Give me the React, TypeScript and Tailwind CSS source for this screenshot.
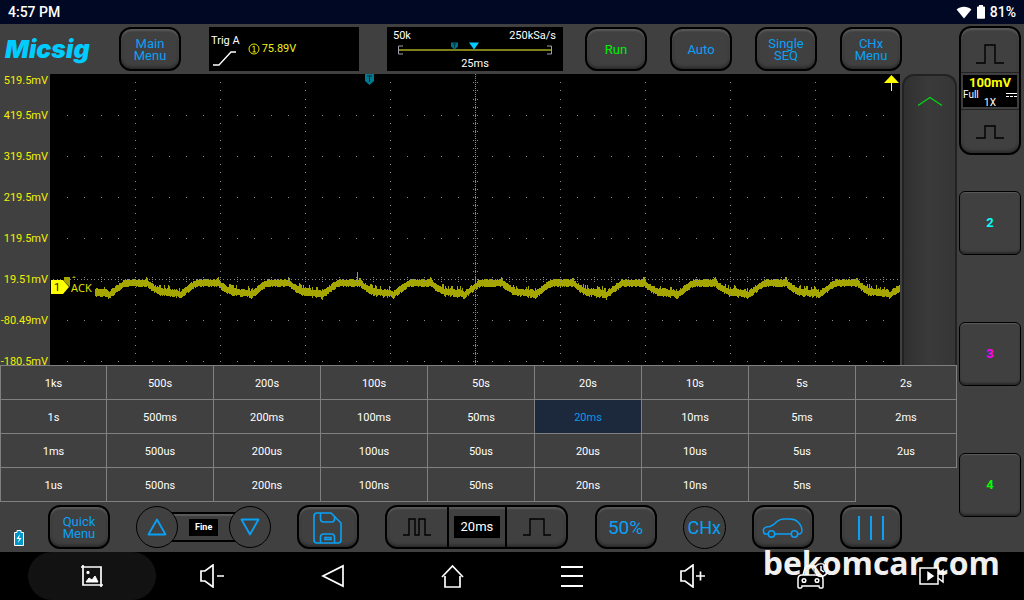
import { useState, type ReactNode } from "react";

const TIME_BASES = [
  ["1ks", "500s", "200s", "100s", "50s", "20s", "10s", "5s", "2s"],
  ["1s", "500ms", "200ms", "100ms", "50ms", "20ms", "10ms", "5ms", "2ms"],
  ["1ms", "500us", "200us", "100us", "50us", "20us", "10us", "5us", "2us"],
  ["1us", "500ns", "200ns", "100ns", "50ns", "20ns", "10ns", "5ns"],
];

const VOLT_LABELS = ["419.5mV", "319.5mV", "219.5mV", "119.5mV", "19.51mV", "-80.49mV", "-180.5mV"];

const PLOT_W = 850;
const PLOT_H = 291;
const DIV_X = 85;
const DIV_Y = 41;

// one period of the trace: [phase, y]
const SHAPE = [
  [0, 219],
  [0.06, 216],
  [0.13, 212],
  [0.2, 209],
  [0.5, 209],
  [0.57, 213],
  [0.64, 216],
  [0.7, 218],
  [0.92, 219],
  [0.97, 221],
  [1, 219],
];

function shapeAt(phase: number) {
  for (let i = 1; i < SHAPE.length; i++) {
    const [x1, y1] = SHAPE[i];
    const [x0, y0] = SHAPE[i - 1];
    if (phase <= x1) return y0 + ((y1 - y0) * (phase - x0)) / (x1 - x0);
  }
  return SHAPE[0][1];
}

function buildTrace() {
  let seed = 7;
  const rand = () => {
    seed = (seed * 16807) % 2147483647;
    return seed / 2147483647;
  };
  let d = "";
  for (let x = 45; x < PLOT_W; x++) {
    const phase = ((x + 10) % 71) / 71;
    const mid = Math.round(shapeAt(phase));
    const low = phase > 0.64;
    let top = mid - 3 - Math.floor(rand() * 1.8);
    let bottom = mid + 3 + Math.floor(rand() * 2);
    if (low && rand() > 0.75) top -= 3;
    if (low && rand() > 0.75) bottom += 1;
    if (phase > 0.48 && phase < 0.52) top -= 2;
    if (x === 307) top = 198;
    d += `M${x + 0.5} ${top}V${bottom}`;
  }
  return d;
}

const TRACE = buildTrace();

function buildGrid() {
  const dots: string[] = [];
  const dot = (x: number, y: number) => dots.push(`M${Math.round(x)} ${Math.round(y) + 0.5}h1`);
  for (let row = 1; row * DIV_Y < PLOT_H; row++) {
    for (let i = 1; i < 50; i++) dot(i * 17, row * DIV_Y);
  }
  for (let col = 1; col < 10; col++) {
    for (let i = 1; i < 36; i++) dot(col * DIV_X, i * 8.2);
  }
  for (let y = 0; y < PLOT_H; y += 2) dot(425, y);
  for (let i = 1; i < 36; i++) {
    dot(423, i * 8.2);
    dot(427, i * 8.2);
  }
  for (let i = 1; i < 250; i++) dot(i * 3.4, 205);
  for (let i = 1; i < 50; i++) {
    dot(i * 17, 203);
    dot(i * 17, 207);
  }
  return dots.join("");
}

const GRID = buildGrid();

function PanelButton({ children, label }: { children: ReactNode; label?: string }) {
  return (
    <button
      type="button"
      aria-label={label}
      className="flex h-11 w-[62px] shrink-0 items-center justify-center rounded-xl border-2 border-black bg-[#404040] pt-px text-center text-[13px] leading-3 text-[#0aa0f5] shadow-[inset_0_2px_2px_#5a5a5a,inset_0_-2px_3px_#2a2a2a]"
    >
      {children}
    </button>
  );
}

function ChannelButton({ name, color }: { name: string; color: string }) {
  return (
    <button
      type="button"
      className={`flex h-16 w-[62px] items-center justify-center rounded-md border border-black bg-[#404040] text-[13px] font-bold shadow-[inset_0_1px_1px_#5a5a5a,inset_0_-2px_2px_#2a2a2a] ${color}`}
    >
      {name}
    </button>
  );
}

function Pulse({ d, className }: { d: string; className: string }) {
  return (
    <svg viewBox="0 0 28 20" className={className} fill="none" stroke="#000" strokeWidth="1.4">
      <path d={d} />
    </svg>
  );
}

function StatusBar() {
  return (
    <header className="flex h-6 shrink-0 items-center justify-between bg-[#000823] px-2 text-[14px] font-medium text-white">
      <span>4:57 PM</span>
      <div className="flex items-center gap-1">
        <svg viewBox="0 0 16 13" className="h-[13px] w-4" fill="#fff">
          <path d="M8 12.6 0.6 3.6C2.6 1.8 5.2.8 8 .8s5.4 1 7.4 2.8z" />
        </svg>
        <svg viewBox="0 0 10 14" className="h-[14px] w-[10px]" fill="#fff">
          <path d="M3 0h4v1.6h1.2q.8 0 .8.8V13q0 .8-.8.8H1.8Q1 13.8 1 13V2.4q0-.8.8-.8H3z" />
        </svg>
        <span>81%</span>
      </div>
    </header>
  );
}

function TopBar() {
  return (
    <div className="flex h-[50px] items-center justify-between pr-[55px] pl-[5px]">
      <div className="flex items-center gap-7">
        <span className="w-[86px] font-['Inter'] text-[25px] leading-6 font-black text-[#00ccff] italic">Micsig</span>
        <PanelButton>
          Main
          <br />
          Menu
        </PanelButton>
        <div className="flex h-11 w-[150px] items-center gap-[6px] bg-black pl-[2px] text-[11px] text-white">
          <div className="flex flex-col gap-1 pt-1">
            <span className="text-[11px] leading-3">Trig A</span>
            <svg viewBox="0 0 26 16" className="h-4 w-[26px]" fill="none" stroke="#fff" strokeWidth="1.3">
              <path d="M2 14h6L20 1h5" />
            </svg>
          </div>
          <span className="flex items-center gap-[2px] text-[#f0f020]">
            <svg viewBox="0 0 12 12" className="ml-[2px] h-3 w-3" fill="none" stroke="#e6e600">
              <circle cx="6" cy="6" r="5" />
              <path d="M4.5 4 6.200 3v6M4.5 9h3.400" />
            </svg>
            75.89V
          </span>
        </div>
        <div className="h-11 w-44 shrink-0 bg-black px-[6px] text-[11px] leading-3 text-white">
          <div className="flex justify-between pt-[3px] pr-px">
            <span>50k</span>
            <span>250kSa/s</span>
          </div>
          <svg viewBox="0 0 164 15" className="h-4 w-full" fill="none">
            <path d="M6 7.5h153" stroke="#ffff33" />
            <path d="M10 3.5H5.5v8H10M154 3.5h4.5v8H154" stroke="#a0a0b0" />
            <path d="M58 0h7v4L61.5 7 58 4z" fill="#007088" />
            <path d="M60 1.5h3M61.5 2v3" stroke="#002a33" />
            <path d="M76 0h10l-5 7z" fill="#00ccff" />
          </svg>
          <div className="text-center">25ms</div>
        </div>
      </div>
      <div className="flex gap-[23px]">
        <PanelButton>
          <span className="text-[#00f000]">Run</span>
        </PanelButton>
        <PanelButton>Auto</PanelButton>
        <PanelButton>
          Single
          <br />
          SEQ
        </PanelButton>
        <PanelButton>
          CHx
          <br />
          Menu
        </PanelButton>
      </div>
    </div>
  );
}

function Scope() {
  return (
    <div className="flex h-[291px] overflow-hidden">
      <div className="w-[50px] shrink-0 pt-px pr-[2px] text-right text-[11px] text-[#f0f000]">
        <div className="h-5 leading-3">519.5mV</div>
        {VOLT_LABELS.map((v) => (
          <div key={v} className="h-[41px] leading-[41px] whitespace-nowrap">
            {v}
          </div>
        ))}
      </div>
      <svg
        viewBox={`0 0 ${PLOT_W} ${PLOT_H}`}
        preserveAspectRatio="none"
        className="h-full min-w-0 flex-1 bg-black"
        fill="none"
      >
        <path d={TRACE} stroke="#a6a600" shapeRendering="crispEdges" />
        <path d={GRID} stroke="#8a8a8a" shapeRendering="crispEdges" />
        <path d="M14 203h6v10l-6-6zM22 204l2-2 2 2z" fill="#a6a600" />
        <path d="M1 206h12l6 7-6 7H1z" fill="#ffff00" />
        <text x="4" y="217" fill="#222" fontSize="11">
          1
        </text>
        <rect x="20" y="207" width="24" height="13" fill="#000" />
        <text x="21" y="218" fill="#e6e600" fontFamily="Open Sans" fontSize="11">
          ACK
        </text>
        <path d="M315 0h9v7l-4.5 4-4.5-4z" fill="#007a90" />
        <path d="M317 2h5M319.5 2v6" stroke="#002a33" />
        <path d="M841.5 1 834 9h15zM841 9h1v8h-1z" fill="#ffff00" />
      </svg>
      <button
        type="button"
        aria-label="Expand"
        className="ml-[2px] flex w-[55px] shrink-0 justify-center rounded-t-xl border-x-2 border-t-2 border-[#222] bg-gradient-to-r from-[#303030] via-[#3a3a3a] to-[#363636] pt-5"
      >
        <svg viewBox="0 0 26 12" className="h-3 w-[26px]" fill="none" stroke="#00d810" strokeWidth="1.3">
          <path d="M1 9.5 13 1.5l12 8" />
        </svg>
      </button>
    </div>
  );
}

function TimeBaseGrid({ value, onChange }: { value: string; onChange: (v: string) => void }) {
  return (
    <div className="border-t border-[#808080]">
      {TIME_BASES.map((row) => (
        <div key={row[0]} className="grid grid-cols-[107fr_repeat(7,107fr)_101fr]">
          {row.map((t, i) => (
            <button
              key={t}
              type="button"
              onClick={() => onChange(t)}
              className={`h-[34px] border-r border-b border-[#808080] pt-[3px] text-[11px] ${i === 0 ? "border-l" : ""} ${
                t === value ? "bg-[#1c283c] text-[#0a9ae8]" : "text-white"
              }`}
            >
              {t}
            </button>
          ))}
        </div>
      ))}
    </div>
  );
}

function BottomBar({ timeBase }: { timeBase: string }) {
  return (
    <div className="flex h-[50px] items-center gap-6 pr-[55px] pl-[14px]">
      <svg viewBox="0 0 10 16" className="mt-[22px] h-4 w-[10px] shrink-0">
        <path d="M3 .5h4v2h2.5v13h-9v-13H3z" fill="#0098c8" stroke="#fff" />
        <path d="M6 4 2.5 9H5l-1 4 3.5-5H5z" fill="#fff" />
      </svg>
      <div className="flex flex-1 items-center justify-between">
        <PanelButton>
          Quick
          <br />
          Menu
        </PanelButton>
        <div className="flex items-center">
          <button
            type="button"
            aria-label="Increase"
            className="z-10 flex size-[42px] items-center justify-center rounded-full border border-black bg-[#404040]"
          >
            <svg viewBox="0 0 20 18" className="h-[18px] w-5" fill="none" stroke="#0aa0f5" strokeWidth="1.8" strokeLinejoin="round">
              <path d="M10 1.5 18.5 16.5h-17z" />
            </svg>
          </button>
          <div className="-mx-2 flex h-[30px] w-[67px] items-center justify-center border-y-2 border-black shadow-[inset_0_2px_1px_#5a5a5a]">
            <span className="bg-black px-[6px] text-[9px] leading-[17px] font-bold text-white">Fine</span>
          </div>
          <button
            type="button"
            aria-label="Decrease"
            className="z-10 flex size-[42px] items-center justify-center rounded-full border border-black bg-[#404040]"
          >
            <svg viewBox="0 0 20 18" className="h-[18px] w-5" fill="none" stroke="#0aa0f5" strokeWidth="1.8" strokeLinejoin="round">
              <path d="M10 16.5 18.5 1.5h-17z" />
            </svg>
          </button>
        </div>
        <PanelButton label="Save">
          <svg viewBox="0 0 30 34" className="h-[34px] w-[30px]" fill="none" stroke="#0aa0f5" strokeWidth="1.6">
            <path d="M4 2h14l10 10v17q0 3-3 3H4q-3 0-3-3V5q0-3 3-3z" />
            <path d="M7.5 2v6q0 3 3 3h8q3 0 3-3V5M7.5 32v-6q0-3 3-3h8q3 0 3 3v6" />
            <path d="M12 26.5h6v2h-6z" />
          </svg>
        </PanelButton>
        <div className="flex h-11 w-[183px] items-stretch overflow-hidden rounded-xl border-2 border-black shadow-[inset_0_2px_2px_#5a5a5a,inset_0_-2px_3px_#2a2a2a]">
          <button type="button" aria-label="Zoom out time base" className="flex flex-1 items-center justify-center">
            <Pulse d="M0 18h6V2h6v16h4V2h6v16h6" className="h-5 w-7" />
          </button>
          <div className="flex w-[60px] items-center justify-center border-x-2 border-black">
            <span className="w-[46px] bg-black text-center text-[13px] leading-[22px] text-white">{timeBase}</span>
          </div>
          <button type="button" aria-label="Zoom in time base" className="flex flex-1 items-center justify-center">
            <Pulse d="M0 18h7V2h14v16h7" className="h-5 w-7" />
          </button>
        </div>
        <PanelButton>
          <span className="text-[19px]">50%</span>
        </PanelButton>
        <button
          type="button"
          className="flex size-[43px] items-center justify-center rounded-full border border-black text-[18px] text-[#0aa0f5]"
        >
          CHx
        </button>
        <PanelButton label="Vehicle">
          <svg viewBox="0 0 42 22" className="h-[22px] w-[42px]" fill="none" stroke="#0aa0f5" strokeWidth="1.5">
            <path d="M6 17H3q-2-1-1.5-4.5Q2.5 9.5 8 9.5 12 8 15 4.5 18 2 22 2h6q5 0 8 3 4 4 4 9-.5 3-3 3h-1M13 17h16" />
            <circle cx="9.5" cy="17" r="3.2" />
            <circle cx="32.5" cy="17" r="3.2" />
          </svg>
        </PanelButton>
        <PanelButton label="Cursors">
          <svg viewBox="0 0 28 24" className="h-6 w-7" fill="none" stroke="#0aa0f5" strokeWidth="2">
            <path d="M2 0v24M14 0v24M26 0v24" />
          </svg>
        </PanelButton>
      </div>
    </div>
  );
}

function ChannelColumn() {
  return (
    <aside className="flex w-[67px] shrink-0 flex-col items-start gap-[67px] pt-[2px] pl-[2px]">
      <div className="-mb-[31px] flex h-[129px] w-[62px] flex-col rounded-xl border-2 border-black shadow-[inset_0_2px_2px_#5a5a5a,inset_0_-2px_3px_#2a2a2a]">
        <button type="button" aria-label="Larger scale" className="flex h-11 items-center justify-center pt-2">
          <Pulse d="M0 19h9V1h10v18h9" className="h-5 w-7" />
        </button>
        <div className="border-y border-[#222] p-[2px]">
          <div className="bg-black text-center text-white">
            <div className="text-[13px] leading-4 font-bold text-[#ffff00]">100mV</div>
            <div className="flex items-center justify-between text-[10px] leading-[8px]">
              <span>Full</span>
              <svg viewBox="0 0 11 5" className="h-[5px] w-[11px]" stroke="#fff">
                <path d="M0 .5h11M0 3.5h3M4 3.5h3M8 3.5h3" />
              </svg>
            </div>
            <div className="text-[10px] leading-[8px]">1X</div>
          </div>
        </div>
        <button type="button" aria-label="Smaller scale" className="flex flex-1 items-center justify-center">
          <Pulse d="M0 16h9V4h10v12h9" className="h-5 w-7" />
        </button>
      </div>
      <ChannelButton name="2" color="text-[#00ffff]" />
      <ChannelButton name="3" color="text-[#ff00ff]" />
      <ChannelButton name="4" color="text-[#00ff00]" />
    </aside>
  );
}

const NAV_ITEMS = [
  {
    label: "Screenshot",
    icon: (
      <>
        <path d="M2 3h20v20M4 1v20h20" />
        <path d="M7 18h12l-3-6-3 4-3-2zM8 7.5h2v2H8z" fill="#fff" strokeWidth="1" />
      </>
    ),
  },
  { label: "Volume down", icon: <path d="M2 7h4l8-6v22l-8-6H2zM18 12h7" /> },
  { label: "Back", icon: <path d="M24 2v20L4 12z" /> },
  { label: "Home", icon: <path d="M3 13 13.5 2 24 13M6 12v11h15V12" /> },
  { label: "Menu", icon: <path d="M2 3h22M2 12h22M2 22h22" strokeWidth="2.2" /> },
  { label: "Volume up", icon: <path d="M2 7h4l8-6v22l-8-6H2zM17 12h9M21.5 7.5v9" /> },
];

function SystemNav() {
  return (
    <nav className="relative flex h-12 shrink-0 bg-black px-8">
      <span className="absolute right-6 bottom-[21px] font-['Open_Sans','Noto_Sans'] text-[32px] leading-8 font-bold text-[#f0f0f0]">
        bekomcar.com
      </span>
      {NAV_ITEMS.map((item, i) => (
        <button
          key={item.label}
          type="button"
          aria-label={item.label}
          className={`flex flex-1 items-center justify-center ${i === 0 ? "-mx-1 rounded-full bg-[#121212] px-1" : ""}`}
        >
          <svg viewBox="0 0 26 24" className="h-6 w-[26px]" fill="none" stroke="#fff" strokeWidth="1.7">
            {item.icon}
          </svg>
        </button>
      ))}
      <button type="button" aria-label="Car diagnostics" className="relative flex flex-1 items-center justify-center">
        <svg viewBox="0 0 32 28" className="h-7 w-8" fill="none" stroke="#fff" strokeWidth="1.5">
          <path d="M7 13 9 6q1-2 3-2h7" />
          <path
            d="M6 13h19q2 1 2 5v7q0 1-1 1h-2q-1 0-1-2H6q0 2-1 2H3q-1 0-1-1v-8q0-4 4-4z"
            fill="#000"
          />
          <circle cx="8" cy="18.5" r="1.8" />
          <circle cx="21" cy="18.5" r="1.8" />
          <circle cx="25" cy="8" r="6.5" />
          <path d="M25 4v4l3 2" />
          <path d="M19.5 12.5a7 7 0 0 1-1.500-6M20 3a7 7 0 0 1 9-1" stroke="#000" strokeWidth="0.6" />
        </svg>
      </button>
      <button type="button" aria-label="Record" className="relative flex flex-1 items-center justify-center">
        <svg viewBox="0 0 26 18" className="h-[18px] w-[26px]" fill="none" stroke="#fff" strokeWidth="1.5">
          <path d="M1 1h18v16H1z" fill="#000" />
          <path d="M19 7l5-4v12l-5-4" />
          <path d="M9 5.5v7l5-3.5z" fill="#fff" />
        </svg>
      </button>
    </nav>
  );
}

export default function App() {
  const [timeBase, setTimeBase] = useState("20ms");

  return (
    <div className="flex min-h-screen flex-col bg-[#404040] font-['Roboto',sans-serif]">
      <StatusBar />
      <div className="flex flex-1">
        <main className="flex min-w-0 flex-1 flex-col">
          <TopBar />
          <Scope />
          <TimeBaseGrid value={timeBase} onChange={setTimeBase} />
          <BottomBar timeBase={timeBase} />
        </main>
        <ChannelColumn />
      </div>
      <SystemNav />
    </div>
  );
}
